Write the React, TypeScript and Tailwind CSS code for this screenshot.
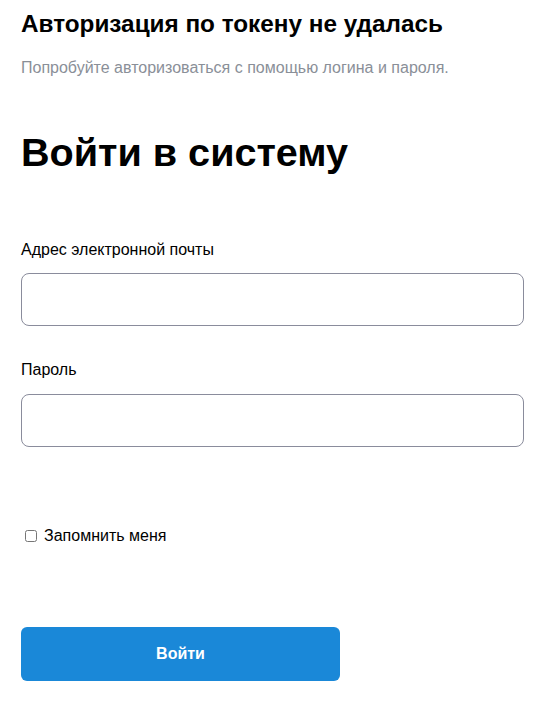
import React from 'react';

const App: React.FC = () => {
  return (
    <div className="min-h-screen bg-white pl-[21px] pr-[17px] pt-[10px] font-['Liberation_Sans',Arial,sans-serif] text-black">
      <h2 className="text-[24.3px] font-bold leading-[28px]">Авторизация по токену не удалась</h2>
      <p className="mt-[20px] text-[16px] leading-[20px] text-[#8a8f98]">
        Попробуйте авторизоваться с помощью логина и пароля.
      </p>

      <h1 className="mt-[50px] text-[39.6px] font-bold leading-[48px]">Войти в систему</h1>

      <form className="mt-[64px]" onSubmit={(e) => e.preventDefault()}>
        <label className="block text-[16px] leading-[20px]">Адрес электронной почты</label>
        <input
          type="email"
          className="mt-[13px] block h-[53px] w-full rounded-[8px] border border-[#8a8c9c] px-3 outline-none"
        />

        <label className="mt-[34px] block text-[16px] leading-[20px]">Пароль</label>
        <input
          type="password"
          className="mt-[14px] block h-[53px] w-full rounded-[8px] border border-[#8a8c9c] px-3 outline-none"
        />

        <div className="mt-[79px] flex items-center pl-[4px]">
          <input type="checkbox" className="h-[12px] w-[12px]" />
          <span className="ml-[7px] text-[16px] leading-[20px]">Запомнить меня</span>
        </div>

        <button
          type="submit"
          className="mt-[81px] h-[54px] w-[319px] rounded-[6px] bg-[#1a88d8] text-[16px] font-bold text-white"
        >
          Войти
        </button>
      </form>
    </div>
  );
};

export default App;
